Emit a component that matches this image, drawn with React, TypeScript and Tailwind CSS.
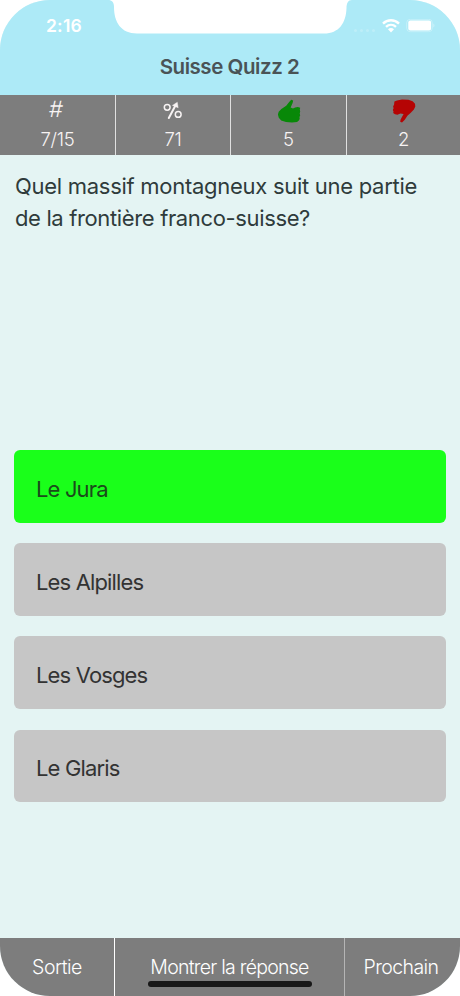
import type { ReactNode } from "react";

const answers = [
  { label: "Le Jura", correct: true },
  { label: "Les Alpilles", correct: false },
  { label: "Les Vosges", correct: false },
  { label: "Le Glaris", correct: false },
];

function PercentIcon() {
  return (
    <svg width="20" height="20" viewBox="0 0 20 20" fill="none" stroke="#f7f3f3" strokeWidth="1.5">
      <circle cx="4.2" cy="6.3" r="2.9" />
      <circle cx="15.2" cy="13.4" r="2.9" />
      <path d="M5.8 17 13 3.5" strokeWidth="2" strokeLinecap="round" />
      <path d="M9.4 4.4 14.3 1.2 15.2 6.8Z" fill="#f7f3f3" strokeWidth="0.4" />
    </svg>
  );
}

function ThumbUpIcon() {
  return (
    <svg width="24" height="24" viewBox="0 0 24 24" fill="#088808">
      <path d="M14.2 0.8 16.2 1.6 15.6 4 13.6 8.4 16 9.4 18.2 8.6 20.8 8 23.2 8.8 22.8 10.6 23.2 12.4 22.7 14.6 23.2 16.3 22.5 18 22.7 20 21.6 21.7 20 23 15 23.5 9 23 4.2 21.4 1.8 18.8 0.9 15.6 1.7 12.8 4.4 10 9.2 6.8 12 3.2Z" />
    </svg>
  );
}

function ThumbDownIcon() {
  return (
    <svg width="24" height="24" viewBox="0 0 24 24" fill="#b50404">
      <path d="M2.4 2.6 5 1.4 10 0.6 16.4 0.8 20.6 2.3 23 4.8 23.3 7.6 21.9 10.5 18.8 13.8 15.4 16.8 12.8 20.8 10 23.4 8.2 22.8 8.6 20.4 11.6 15 8.4 14.6 5.4 15.8 3 15.2 1.2 14 1.5 12.4 0.8 11 1.6 9.2 1.1 7.4 2.1 5.6Z" />
    </svg>
  );
}

function Stat({ icon, value }: { icon: ReactNode; value: string }) {
  return (
    <div className="flex flex-col items-center border-r border-[#e0e0e0] last:border-r-0">
      <div className="flex h-8 items-center justify-center">{icon}</div>
      <div className="h-6 text-[18.5px] leading-6 font-light tracking-[-0.2px]">{value}</div>
    </div>
  );
}

function StatusBar() {
  return (
    <div className="relative h-[50px]">
      <svg className="absolute top-0 left-[108px]" width="244" height="34" viewBox="0 0 244 34" fill="#fff">
        <path d="M0 0C4 0 6 2.5 6 7 6 22 13 33.5 29 33.5H216C231 33.5 238 23 238.5 8 238.7 3 240 0 244 0Z" />
      </svg>
      <div className="flex justify-between pt-[14px] pr-[25px] pl-[46px] text-white">
        <span className="text-[17.5px] leading-6 font-semibold tracking-[0.2px]">2:16</span>
        <div className="flex h-6 items-center">
          <div className="mt-2 mr-[7px] flex gap-[3px]">
            <span className="size-[3px] rounded-full bg-white/20" />
            <span className="size-[3px] rounded-full bg-white/20" />
            <span className="size-[3px] rounded-full bg-white/20" />
            <span className="size-[3px] rounded-full bg-white/20" />
          </div>
          <svg className="mr-[6px]" width="18" height="14" viewBox="0 0 18 14" fill="none" stroke="#fff" strokeWidth="2.4">
            <path d="M1 4.6C5.5 0.2 12.5 0.2 17 4.6" />
            <path d="M4 7.9C6.9 5.2 11.1 5.2 14 7.9" />
            <path d="M6 10.2C7.8 8.6 10.2 8.6 12 10.2L9 13.4Z" fill="#fff" stroke="none" />
          </svg>
          <svg width="29" height="14" viewBox="0 0 29 14" fill="none">
            <rect x="0.7" y="0.3" width="25.6" height="12.4" rx="3.5" stroke="#fff" strokeOpacity="0.3" />
            <rect x="2.3" y="1.6" width="22.8" height="9.8" rx="2" fill="#fff" />
            <path d="M27.4 4.5V8.5C28.8 7.7 28.8 5.3 27.4 4.5Z" fill="#fff" fillOpacity="0.4" />
          </svg>
        </div>
      </div>
    </div>
  );
}

export default function App() {
  return (
    <div className="h-[996px] w-[460px] bg-white font-['Inter',sans-serif]">
      <div className="flex h-full flex-col overflow-hidden rounded-[50px] bg-[#e4f4f3]">
        <header className="h-[95px] bg-[#adeaf7]">
          <StatusBar />
          <h1 className="pt-px pr-px text-center text-[20.5px] leading-8 font-semibold tracking-[-0.45px] text-[#4a5356]">
            Suisse Quizz 2
          </h1>
        </header>

        <section className="grid h-[60px] grid-cols-[116px_115px_116px_113px] bg-[#7d7d7d] text-[#f7f3f3]">
          <Stat
            icon={<span className="-mt-[4px] mr-[3px] -skew-x-3 text-[22.5px] leading-none font-light">#</span>}
            value="7/15"
          />
          <Stat icon={<PercentIcon />} value="71" />
          <Stat icon={<ThumbUpIcon />} value="5" />
          <Stat icon={<ThumbDownIcon />} value="2" />
        </section>

        <main className="flex flex-1 flex-col px-[14px]">
          <p className="h-[295px] pt-4 pl-px text-[22px] leading-[31.5px] tracking-[-0.28px] text-[#2f3b3b]">
            Quel massif montagneux suit une partie
            <br />
            <span className="tracking-[-0.36px]">de la frontière franco-suisse?</span>
          </p>
          <div className="flex flex-col gap-[20.5px]">
            {answers.map((a) => (
              <button
                key={a.label}
                className={`h-[72.7px] rounded-md px-[22px] pt-[6px] text-left text-[22px] tracking-[-0.85px] ${
                  a.correct ? "bg-[#1aff1a] text-[#1b4a1b]" : "bg-[#c6c6c6] text-[#333333]"
                }`}
              >
                {a.label}
              </button>
            ))}
          </div>
        </main>

        <footer className="relative grid h-[58px] grid-cols-[115px_230px_115px] bg-[#7d7d7d] text-[19.5px] font-light tracking-[-0.75px] text-white">
          <button className="border-r border-white pt-px tracking-[-0.5px]">Sortie</button>
          <button className="border-r border-[#b5b5b5] pt-px">Montrer la réponse</button>
          <button className="pt-px pr-[3px] tracking-[-0.6px]">Prochain</button>
          <div className="absolute bottom-[9px] left-[148px] h-[6px] w-[164px] rounded-full bg-[#181818]" />
        </footer>
      </div>
    </div>
  );
}
